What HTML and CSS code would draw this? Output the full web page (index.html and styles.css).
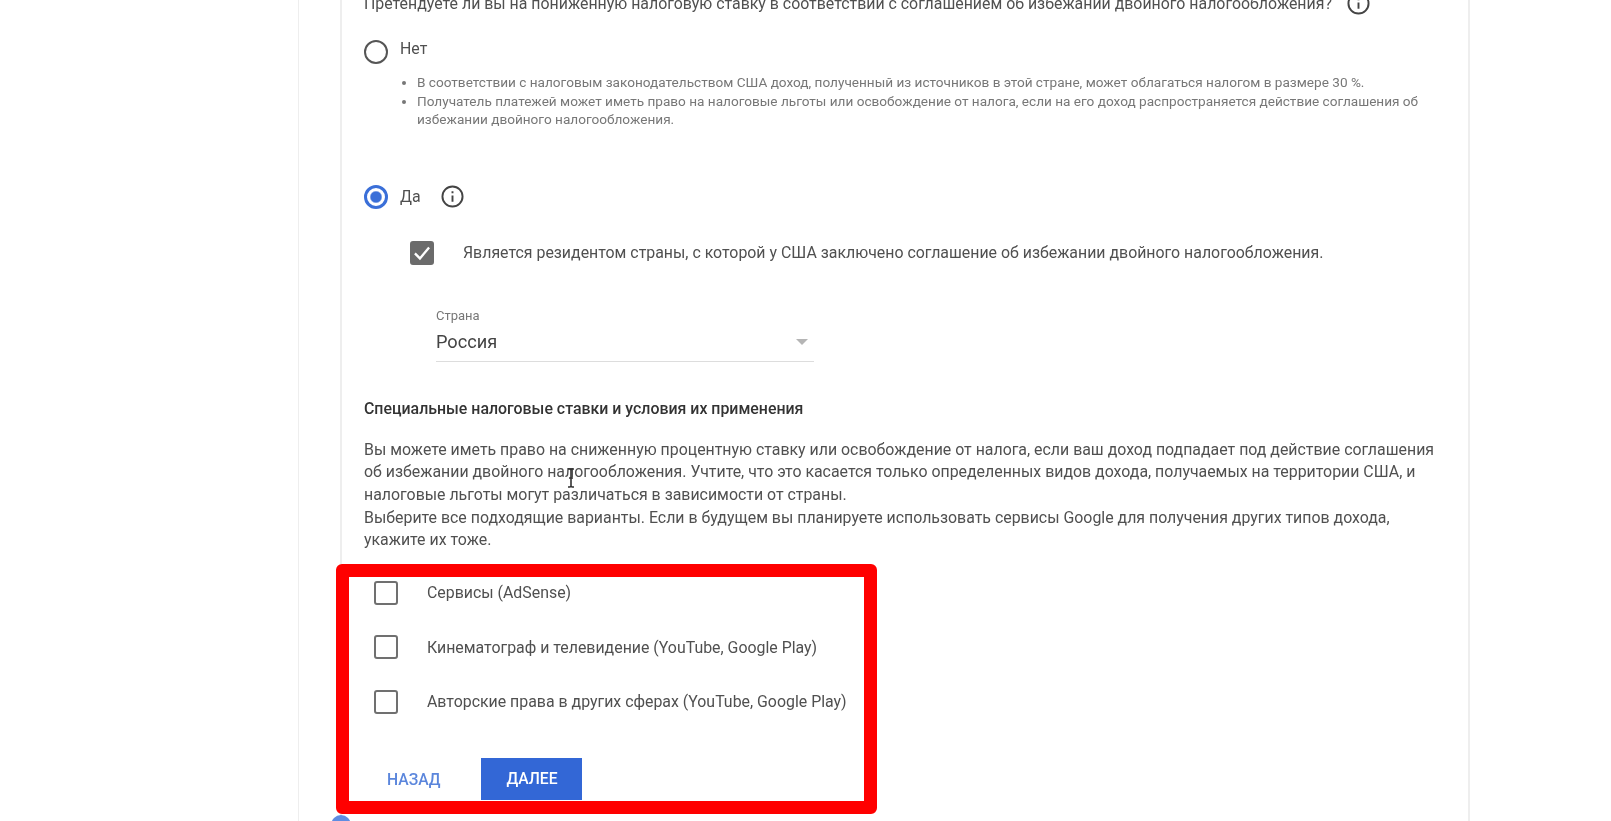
FILE: index.html
```html
<!DOCTYPE html>
<html>
  <head>
    <meta charset="utf-8">
    <title>Налоговая информация</title>
    <link rel="stylesheet" href="styles.css">
  </head>
  <body>
    <div class="sheet">
      <div class="panel">
        <div class="question">
          <span>Претендуете ли вы на пониженную налоговую ставку в соответствии с соглашением об избежании двойного налогообложения?</span>
          <svg class="info" viewBox="0 0 24 24"><circle cx="12" cy="12" r="10.5"/><path d="M12 11v6.5M12 6.5v2"/></svg>
        </div>

        <div class="radio-row no-row">
          <span class="radio"></span>
          <span class="radio-label">Нет</span>
        </div>
        <ul class="notes">
          <li>В соответствии с налоговым законодательством США доход, полученный из источников в этой стране, может облагаться налогом в размере 30 %.</li>
          <li>Получатель платежей может иметь право на налоговые льготы или освобождение от налога, если на его доход распространяется действие соглашения об избежании двойного налогообложения.</li>
        </ul>

        <div class="radio-row yes-row">
          <span class="radio radio-on"></span>
          <span class="radio-label">Да</span>
          <svg class="info" viewBox="0 0 24 24"><circle cx="12" cy="12" r="10.5"/><path d="M12 11v6.5M12 6.5v2"/></svg>
        </div>

        <div class="check-row resident">
          <span class="check check-on">
            <svg viewBox="0 0 24 24"><path d="M3.5 12.5l6 6 11-13"/></svg>
          </span>
          <span>Является резидентом страны, с которой у США заключено соглашение об избежании двойного налогообложения.</span>
        </div>

        <div class="field">
          <div class="field-label">Страна</div>
          <div class="field-value">
            <span>Россия</span>
            <span class="arrow"></span>
          </div>
        </div>

        <h4 class="rates-title">Специальные налоговые ставки и условия их применения</h4>
        <p class="rates-text">Вы можете иметь право на сниженную процентную ставку или освобождение от налога, если ваш доход подпадает под действие соглашения об избежании двойного налогообложения. Учтите, что это касается только определенных видов дохода, получаемых на территории США, и налоговые льготы могут различаться в зависимости от страны.<br>Выберите все подходящие варианты. Если в будущем вы планируете использовать сервисы Google для получения других типов дохода, укажите их тоже.</p>

        <div class="options">
          <div class="check-row"><span class="check"></span><span>Сервисы (AdSense)</span></div>
          <div class="check-row"><span class="check"></span><span>Кинематограф и телевидение (YouTube, Google Play)</span></div>
          <div class="check-row"><span class="check"></span><span>Авторские права в других сферах (YouTube, Google Play)</span></div>
        </div>

        <div class="actions">
          <a class="back" href="#">НАЗАД</a>
          <a class="next" href="#">ДАЛЕЕ</a>
        </div>

        <div class="step-dot"></div>
      </div>
    </div>

    <div class="highlight"></div>
    <svg class="cursor" viewBox="0 0 10 20"><path d="M2 1h2l1 1 1-1h2M5 2v16M2 19h2l1-1 1 1h2M3 10h4"/></svg>
  </body>
</html>
```

FILE: styles.css
```css
html, body {
  margin: 0;
  padding: 0;
  height: 821px;
  overflow: hidden;
  background: #fff;
}
body {
  font-family: Roboto, "Liberation Sans", sans-serif;
  font-size: 15.9px;
  color: #505050;
  position: relative;
}
.sheet {
  margin: -8.5px 0 0 298px;
  width: 1172px;
  padding-left: 41px;
  box-sizing: border-box;
  border-left: 1px solid #eee;
  border-right: 2px solid #eee;
  height: 840px;
  filter: blur(0.35px);
}
.panel {
  border-left: 2px solid #eee;
  padding-left: 22px;
  height: 100%;
}
.question {
  display: flex;
  align-items: center;
  gap: 15px;
  height: 23px;
  white-space: nowrap;
}
.info {
  width: 23px;
  height: 23px;
  fill: none;
  stroke: #444;
  stroke-width: 2;
}
.radio-row {
  display: flex;
  align-items: flex-start;
  height: 24px;
}
.no-row {
  margin-top: 25.5px;
}
.yes-row {
  margin-top: 56px;
}
.radio {
  width: 24px;
  height: 24px;
  box-sizing: border-box;
  border: 2px solid #555;
  border-radius: 50%;
  margin-right: 12px;
}
.radio-on {
  border: 3px solid #3a6fd8;
  background: radial-gradient(circle, #3a6fd8 0 5px, #fff 6.5px);
}
.radio-label {
  line-height: 18px;
}
.yes-row .radio-label {
  line-height: 24px;
}
.yes-row .info {
  margin-left: 20px;
}
.notes {
  margin: 9px 0 0;
  padding: 0 0 0 53px;
  width: 1030px;
  font-size: 13.6px;
  line-height: 18.5px;
  color: #777;
}
.check-row {
  display: flex;
  align-items: center;
  height: 24px;
}
.resident {
  margin: 32px 0 0 46px;
}
.check {
  flex: none;
  width: 24px;
  height: 24px;
  box-sizing: border-box;
  border: 2px solid #707070;
  border-radius: 3px;
  margin-right: 29px;
}
.check-on {
  background: #6b6b6b;
  border-color: #6b6b6b;
}
.check-on svg {
  display: block;
  width: 20px;
  height: 20px;
  fill: none;
  stroke: #fff;
  stroke-width: 2.8;
}
.field {
  margin: 43px 0 0 72px;
  width: 378px;
}
.field-label {
  font-size: 13px;
  line-height: 16px;
  color: #777;
}
.field-value {
  display: flex;
  align-items: center;
  justify-content: space-between;
  margin-top: 6px;
  padding-bottom: 7px;
  border-bottom: 1px solid #ddd;
  font-size: 18.2px;
  line-height: 24px;
  color: #444;
}
.arrow {
  width: 0;
  height: 0;
  margin-right: 6px;
  border-left: 6px solid transparent;
  border-right: 6px solid transparent;
  border-top: 6px solid #b5b5b5;
}
.rates-title {
  margin: 36px 0 0;
  font-size: 15.9px;
  font-weight: 500;
  line-height: 22px;
  color: #333;
}
.rates-text {
  margin: 19px 0 0;
  width: 1085px;
  line-height: 22.7px;
}
.options {
  display: flex;
  flex-direction: column;
  gap: 30.5px;
  margin: 28.5px 0 0 10px;
}
.actions {
  display: flex;
  align-items: center;
  gap: 41px;
  margin: 44.5px 0 0 23px;
  height: 42px;
}
.actions a {
  text-decoration: none;
  font-weight: 500;
  font-size: 15.7px;
}
.back {
  color: #5b86dc;
}
.next {
  width: 101px;
  height: 42px;
  line-height: 42px;
  text-align: center;
  background: #3367d6;
  color: #fff;
}
.step-dot {
  width: 20px;
  height: 20px;
  margin: 15px 0 0 -33px;
  border-radius: 50%;
  background: #5f8ce2;
}
.highlight {
  position: absolute;
  left: 336px;
  top: 564px;
  width: 541px;
  height: 250px;
  box-sizing: border-box;
  border: 13px solid #f00;
  border-radius: 6px;
}
.cursor {
  position: absolute;
  left: 566px;
  top: 468px;
  width: 10px;
  height: 20px;
  fill: none;
  stroke: #333;
  stroke-width: 1.6;
}
```
